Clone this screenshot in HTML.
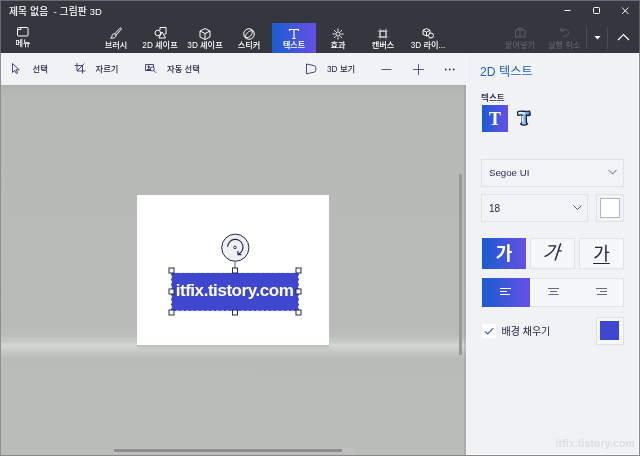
<!DOCTYPE html>
<html><head><meta charset="utf-8">
<style>
*{box-sizing:border-box;margin:0;padding:0}
html,body{width:640px;height:456px;overflow:hidden;background:#b8bab8}
body{position:relative;font-family:"Liberation Sans","Noto Sans CJK KR","NanumGothic",sans-serif;color:#1f2040}
.abs{position:absolute}
#hdr{left:0;top:0;width:640px;height:53px;background:#35373f}
#title{left:9px;top:5px;font-size:9.8px;color:#fff;letter-spacing:0.1px;line-height:14px;white-space:nowrap;font-weight:500}
.tab{position:absolute;top:23px;height:30px;color:#fff;font-size:8.2px;text-align:center;line-height:10px;white-space:nowrap;font-weight:500}
.tab span{position:absolute;left:0;right:0;top:18px}
.tab svg{position:absolute;left:50%;top:4px;margin-left:-7px;width:14px;height:14px;fill:none;stroke:#fff;stroke-width:1}
.grad{background:linear-gradient(90deg,#1a5dd0,#6650e4)}
#tb{left:0;top:53px;width:466px;height:32px;background:#f1f2f5}
.tbl{position:absolute;top:64px;font-size:8.3px;line-height:10px;color:#1e1f44;white-space:nowrap;font-weight:500}
#view{left:0;top:85px;width:466px;height:371px;background:linear-gradient(#aeb0ae 0,#b5b7b5 5px,#b7b9b7 14px,#b9bbb9 60%,#babcba 100%)}
#side{left:466px;top:53px;width:174px;height:403px;background:#f1f2f4;border-left:1px solid #f8f8fb}
.box{position:absolute;border:1px solid #e2e3e9;background:#f2f3f6}
.btn{position:absolute;border:1px solid #e2e3e8;background:#f6f7f9}
.ga{position:absolute;top:244px;text-align:center;font-size:18px;line-height:20px;color:#23244a;text-underline-offset:2.500px;text-decoration-thickness:1px}
</style></head><body>
<div id="root" style="position:absolute;left:0;top:0;width:640px;height:456px;will-change:transform">
<div id="view" class="abs"></div>
<div class="abs" style="left:0;top:334px;width:466px;height:24px;background:linear-gradient(rgba(255,255,255,0) 0,rgba(222,225,222,.35) 30%,rgba(225,228,225,.68) 48%,rgba(225,228,225,.5) 60%,rgba(255,255,255,0) 100%)"></div>
<div class="abs" style="left:137px;top:345px;width:192px;height:6px;background:linear-gradient(rgba(150,152,150,.45),rgba(170,172,170,.2) 50%,rgba(170,172,170,0))"></div>
<div class="abs" style="left:137px;top:195px;width:192px;height:150px;background:#fff"></div>
<!-- text box -->
<div class="abs" style="left:171px;top:272.500px;width:128px;height:38.500px;background:#3e47ce"></div>
<div id="ctext" class="abs" style="left:172px;top:281px;width:125px;text-align:center;font-size:17px;font-weight:bold;color:#fff;line-height:20px;letter-spacing:-0.45px;white-space:nowrap">itfix.tistory.com</div>
<svg class="abs" style="left:160px;top:230px" width="150" height="90" viewBox="0 0 150 90">
<rect x="11.500" y="42.500" width="127" height="38.500" fill="none" stroke="#e4e6fa" stroke-width="1" stroke-dasharray="3 2"/>
<line x1="75" y1="31.500" x2="75" y2="38" stroke="#555a70" stroke-width="1"/>
<circle cx="75.300" cy="17.700" r="13.600" fill="#eff0f5" stroke="#23244a" stroke-width="1"/>
<path d="M67.600 16.800 a7.700 7.700 0 1 1 11 7.200" fill="none" stroke="#23244a" stroke-width="1.100"/>
<path d="M77.900 21 v3.600 h3.600" fill="none" stroke="#23244a" stroke-width="1.100"/>
<circle cx="75" cy="17.400" r="1.300" fill="none" stroke="#23244a" stroke-width=".9"/>
<g fill="#fff" stroke="#262848" stroke-width="1">
<rect x="9" y="38" width="5" height="5"/><rect x="72.500" y="38" width="5" height="5"/><rect x="136" y="38" width="5" height="5"/>
<rect x="9" y="59" width="5" height="5"/><rect x="136" y="59" width="5" height="5"/>
<rect x="9" y="80" width="5" height="5"/><rect x="72.500" y="80" width="5" height="5"/><rect x="136" y="80" width="5" height="5"/>
</g>
</svg>
<!-- scrollbars -->
<div class="abs" style="left:459px;top:174px;width:3px;height:181px;background:#979997"></div>
<div class="abs" style="left:464px;top:85px;width:2px;height:371px;background:rgba(120,122,120,.25)"></div>
<div class="abs" style="left:113px;top:448px;width:240px;height:6px;background:rgba(255,255,255,.06)"></div>
<div class="abs" style="left:113.500px;top:449px;width:228px;height:3px;background:#8c8e8c"></div>

<div id="hdr" class="abs"></div>
<div class="abs" style="left:0;top:0;width:640px;height:1px;background:#696b73"></div>
<div class="abs" style="left:0;top:0;width:1px;height:53px;background:#696b73"></div>
<div class="abs" style="left:639px;top:0;width:1px;height:53px;background:#5e6068"></div>
<div id="title" class="abs">제목 없음 <span style="margin-left:2.300px">-</span> 그림판 <span style="font-size:9.500px;letter-spacing:0">3D</span></div>
<!-- window controls -->
<svg class="abs" style="left:560px;top:0" width="80" height="22" viewBox="0 0 80 22" fill="none" stroke="#fff" stroke-width="1">
<line x1="4.500" y1="10.500" x2="10.500" y2="10.500"/>
<rect x="33.500" y="7.500" width="6" height="6" rx="1"/>
<path d="M62 7.500 l6.500 6.500 M68.500 7.500 l-6.500 6.500"/>
</svg>
<!-- tabs -->
<div class="tab" style="left:3px;width:40px;top:21px"><svg viewBox="0 0 14 14"><rect x="1.500" y="2.500" width="10.500" height="8.500" rx="1"/><path d="M1.500 4.500 h3.500 v-2"/></svg><span>메뉴</span></div>
<div class="tab" style="left:96px;width:40px"><svg viewBox="0 0 14 14"><path d="M12.300 2.200 L7 8.300 M11 1.200 L5.600 7 M5.600 7 l1.400 1.300 c.3 1.800 -1.800 3.300 -5.400 2.800 c1.500 -.8 1.300 -1.800 1.500 -2.800 c.5 -1.300 1.500 -1.600 2.500 -1.300 z M11 1.200 c.8 -.5 1.800 .3 1.300 1"/></svg><span>브러시</span></div>
<div class="tab" style="left:137px;width:46px"><svg viewBox="0 0 14 14"><circle cx="4.800" cy="6" r="2.800"/><path d="M7 3 v-2.500 h6 v6.500 h-1.500 M5.800 11 l3.300 -6 l3.500 6 z"/></svg><span>2D 셰이프</span></div>
<div class="tab" style="left:182px;width:46px"><svg viewBox="0 0 14 14"><path d="M7 1.500 l5 2.500 v6 l-5 2.500 l-5 -2.500 v-6 z M2 4 l5 2.500 l5 -2.500 M7 6.500 v6"/></svg><span>3D 셰이프</span></div>
<div class="tab" style="left:228px;width:42px"><svg viewBox="0 0 14 14"><circle cx="7" cy="7" r="5.300"/><path d="M3.500 10.800 c0 -4.500 3 -7 7 -7.300 M3.500 10.800 c4.500 0 7 -3 7 -7.300"/></svg><span>스티커</span></div>
<div class="tab grad" style="left:272px;width:44px"><svg viewBox="0 0 14 14" style="stroke-width:1.200"><path d="M2.500 4 v-1.500 h9 v1.500 M7 2.500 v9 M5.300 11.500 h3.400"/></svg><span style="font-weight:bold;font-size:8px">텍스트</span></div>
<div class="tab" style="left:318px;width:40px"><svg viewBox="0 0 14 14"><circle cx="7" cy="7" r="2.100"/><path d="M7 1.500 v2.200 M7 10.300 v2.200 M1.500 7 h2.200 M10.300 7 h2.200 M3.100 3.100 l1.600 1.600 M9.300 9.300 l1.600 1.600 M10.900 3.100 l-1.600 1.600 M4.700 9.300 l-1.600 1.600"/></svg><span>효과</span></div>
<div class="tab" style="left:362px;width:42px"><svg viewBox="0 0 14 14"><rect x="4" y="4" width="6" height="6"/><path d="M4 1.500 v11 M10 1.500 v11 M1.500 4 h11 M1.500 10 h11" stroke-opacity=".55" stroke-dasharray="1.500 1"/></svg><span>캔버스</span></div>
<div class="tab" style="left:405px;width:46px"><svg viewBox="0 0 14 14"><path d="M5.500 1.500 l3.500 1.800 v4 l-3.500 1.800 l-3.500 -1.800 v-4 z M2 3.300 l3.500 1.800 l3.500 -1.800 M5.500 5 v4"/><circle cx="10" cy="8.500" r="2.500" fill="#35373f"/><path d="M8 11.500 l1 -1"/></svg><span>3D 라이...</span></div>
<div class="tab" style="left:498px;width:44px;color:#5c5e68"><svg viewBox="0 0 14 14" style="stroke:#5c5e68"><path d="M2.500 3 h9.500 v7 h-9.500 z M5 3 v-2 h4 v2 M7 3 v7"/></svg><span>붙여넣기</span></div>
<div class="tab" style="left:542px;width:44px;color:#5c5e68"><svg viewBox="0 0 14 14" style="stroke:#5c5e68"><path d="M4 .5 v3.500 h3.500 M4 4 c2.500 -3 7.500 -1.500 7.500 1.500 c0 2 -2.500 3.500 -5.500 4.500"/></svg><span>실행 취소</span></div>
<svg class="abs" style="left:585px;top:23px" width="55" height="30" viewBox="0 0 55 30"><line x1="1.500" y1="4" x2="1.500" y2="26" stroke="#4b4d56"/><line x1="22.500" y1="4" x2="22.500" y2="26" stroke="#4b4d56"/><path d="M9.500 13 h6 l-3 3.500 z" fill="#fff"/><path d="M33 17 l5.500 -5.500 l5.500 5.500" fill="none" stroke="#fff" stroke-width="1.200"/></svg>

<div id="tb" class="abs"></div>
<div class="tbl" style="left:32.500px">선택</div>
<div class="tbl" style="left:95.500px">자르기</div>
<div class="tbl" style="left:167px">자동 선택</div>
<div class="tbl" style="left:327px">3D 보기</div>
<svg class="abs" style="left:0;top:52px" width="466" height="34" viewBox="0 0 466 34" fill="none" stroke="#33346a" stroke-width=".9">
<path d="M12.500 11.500 v9 l2.300 -2.200 l1.400 3.200 l1.400 -.6 l-1.400 -3.100 h3 z"/>
<path d="M77 11 v8 h8.500 M74.500 13.500 h8 v8 M84.500 11.500 l-7.500 7.500"/>
<path d="M145.500 12.500 h8 v6 h-8 z"/><circle cx="148.700" cy="14.800" r="1.200" fill="#33346a" stroke="none"/><path d="M146.500 18.500 c0 -2.800 4.500 -2.800 4.500 0z" fill="#33346a" stroke="none"/><circle cx="152.300" cy="17" r="2" fill="#f1f2f5"/><path d="M153.700 18.400 l2.300 2.400"/>
<path d="M306.500 12 l7.800 1.700 q1.500 .3 1.500 1.800 v2.800 q0 1.500 -1.500 1.800 l-7.800 1.700 z" stroke-linejoin="round"/>
<path d="M381.500 17.500 h10" stroke="#45467a" stroke-width=".9"/>
<path d="M413 17.500 h11 M418.500 12 v11" stroke="#45467a" stroke-width=".9"/>
<g fill="#2b2c58" stroke="none"><circle cx="445.700" cy="17.500" r=".9"/><circle cx="449.700" cy="17.500" r=".9"/><circle cx="453.700" cy="17.500" r=".9"/></g>
</svg>

<div id="side" class="abs"></div>
<div class="abs" style="left:480px;top:64px;font-size:12.200px;line-height:16px;color:#2462b6">2D 텍스트</div>
<div class="abs" style="left:481px;top:93px;font-size:8.600px;line-height:10px;color:#1f2040;font-weight:500">텍스트</div>
<div class="abs grad" style="left:482px;top:105px;width:26px;height:27px"></div>
<div class="abs" style="left:482px;top:108.500px;width:26px;text-align:center;font-family:'Liberation Serif',serif;font-weight:bold;font-size:18px;line-height:20px;color:#fff">T</div>
<svg class="abs" style="left:510px;top:105px" width="30" height="26" viewBox="0 0 30 26"><defs><linearGradient id="g3" x1="0" x2="1"><stop offset="0" stop-color="#d8efff"/><stop offset=".5" stop-color="#8cc8f6"/><stop offset="1" stop-color="#2a86e4"/></linearGradient></defs><path d="M8 6.500 c3 -1.500 7.500 1 11.500 -.5 l.8 4 c-1.800 1 -3 .5 -4 0 v6 c0 2 .8 2.500 1.300 3 c-2 1.500 -5.500 1.500 -7 0 c1 -.5 1.500 -1.500 1.500 -3 v-6 c-1.500 -.5 -2.800 0 -4.100 .5 c-.5 -1.500 -.8 -3 0 -4 z" fill="url(#g3)" stroke="#1a1b3a" stroke-width="1.300" stroke-linejoin="round"/><path d="M9 8 c2 -.8 4 .2 6 .2 M12.300 11 v6.500" stroke="#fff" stroke-width="1.100" fill="none"/></svg>
<!-- dropdowns -->
<div class="box" style="left:481px;top:158.500px;width:143px;height:28px"></div>
<div class="abs" style="left:489px;top:166.500px;font-size:9.700px;line-height:12px;color:#2b2c58">Segoe UI</div>
<div class="box" style="left:481px;top:194px;width:107px;height:28px"></div>
<div class="abs" style="left:489px;top:202.500px;font-size:10px;line-height:12px;color:#23244a">18</div>
<div class="box" style="left:596px;top:194px;width:28px;height:28px"></div>
<div class="abs" style="left:600px;top:198px;width:20px;height:20px;border:1px solid #b5b6bd;background:#fff"></div>
<svg class="abs" style="left:560px;top:159px" width="64" height="64" viewBox="0 0 64 64" fill="none" stroke="#4a4c6a" stroke-width=".9"><path d="M48.500 11 l4 4 l4 -4"/><path d="M13.500 46.500 l4 4 l4 -4"/></svg>
<!-- style buttons -->
<div class="abs grad" style="left:482px;top:238px;width:44px;height:31px"></div>
<div class="btn" style="left:530px;top:238px;width:45px;height:31px"></div>
<div class="btn" style="left:579px;top:238px;width:45px;height:31px"></div>
<div class="ga" style="left:482px;width:44px;color:#fff;font-weight:bold">가</div>
<div class="ga" style="left:530px;width:46px;top:243px;font-size:19px;transform:skewX(-18deg)">가</div>
<div class="ga" style="left:579px;width:45px;text-decoration:underline">가</div>
<div class="btn" style="left:482px;top:278px;width:142px;height:29px"></div>
<div class="abs grad" style="left:482px;top:278px;width:48px;height:29px"></div>
<svg class="abs" style="left:482px;top:277px" width="142" height="29" viewBox="0 0 142 29" fill="none" stroke-width="1"><path d="M18 11.500 h11 M18 14.500 h7 M18 17.500 h10" stroke="#fff"/><path d="M66 11.500 h11 M68 14.500 h7 M66.500 17.500 h10 M114 11.500 h11 M118 14.500 h7 M115 17.500 h10" stroke="#55577a" stroke-width=".9"/></svg>
<!-- checkbox -->
<div class="abs" style="left:482px;top:324px;width:14px;height:14px;background:#fff"></div>
<svg class="abs" style="left:482px;top:324px" width="14" height="14" viewBox="0 0 14 14"><path d="M3 7.300 l2.700 2.700 l5.500 -5.800" fill="none" stroke="#2c5cb4" stroke-width="1.100"/></svg>
<div class="abs" style="left:501.500px;top:326px;font-size:10px;line-height:11px;color:#23244a">배경 채우기</div>
<div class="btn" style="left:596px;top:317px;width:28px;height:28px;border-color:#dfe0e6"></div>
<div class="abs" style="left:600px;top:321.300px;width:19px;height:18.700px;background:#3e47ce"></div>
<div class="abs" style="left:555.500px;top:437px;font-size:10.500px;line-height:12px;font-weight:bold;color:#dcdde2;letter-spacing:.12px">itfix.tistory.com</div>
<div class="abs" style="left:0;top:53px;width:1px;height:403px;background:#8e908e"></div>
<div class="abs" style="left:639px;top:53px;width:1px;height:403px;background:#858789"></div>
<div class="abs" style="left:467px;top:454px;width:172px;height:1px;background:rgba(255,255,255,.7)"></div>
<div class="abs" style="left:638px;top:53px;width:1px;height:401px;background:rgba(255,255,255,.7)"></div>
<div class="abs" style="left:0;top:455px;width:640px;height:1px;background:#88898a"></div>
</div>
</body></html>
